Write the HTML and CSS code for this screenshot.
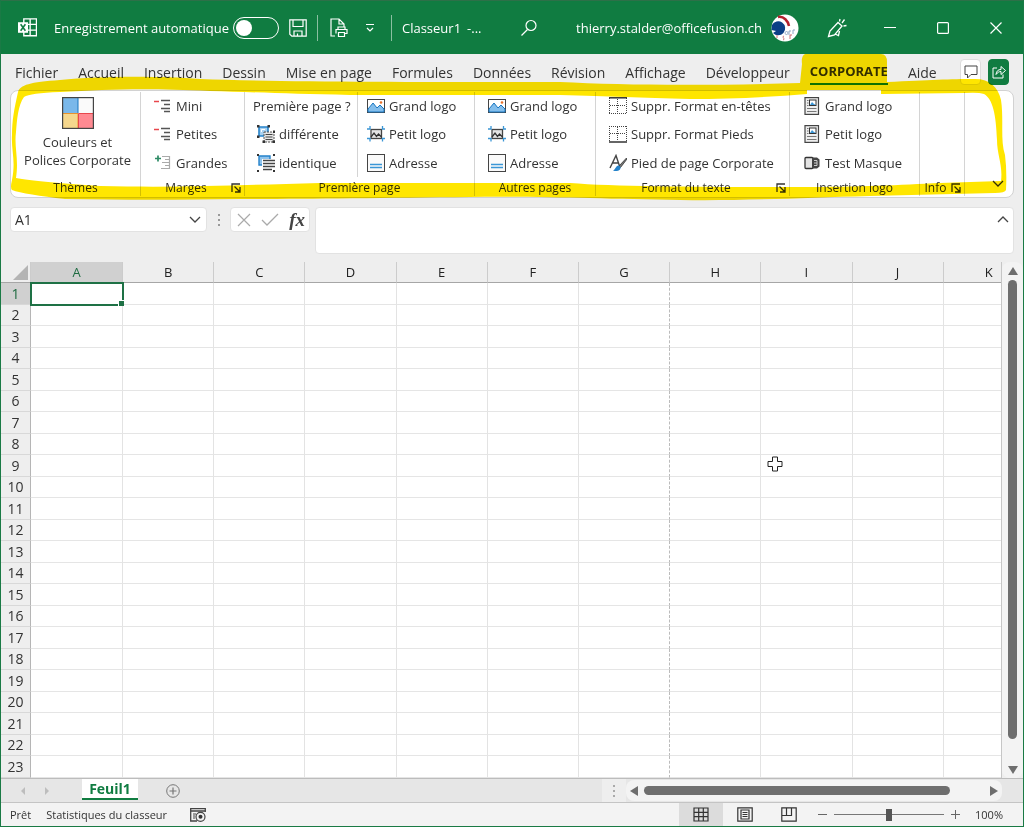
FILE: index.html
```html
<!DOCTYPE html>
<html lang="fr">
<head>
<meta charset="utf-8">
<title>Classeur1</title>
<link rel="stylesheet" href="styles.css">
</head>
<body>
<svg class="defs" aria-hidden="true">
  <symbol id="i-minus" viewBox="0 0 18 18"><path d="M0 4.500h5" stroke="#e8474c" stroke-width="1.500"/><path d="M7 3.500h9M10 7.500h6M7 11.500h9M10 14.500h6" stroke="#555" stroke-width="1.300"/></symbol>
  <symbol id="i-plus" viewBox="0 0 18 18"><path d="M1 4.500h6M4 1.500v6" stroke="#2e8b66" stroke-width="1.700"/><path d="M8 2.500h7M11 5.500h4M8 8.500h7M11 11.500h4M7 14.500h8M15.500 2v13" stroke="#aaa" stroke-width="1.200"/></symbol>
  <symbol id="i-picture" viewBox="0 0 18 18"><rect x=".5" y="2.500" width="17" height="13" fill="#fff" stroke="#444"/><path d="M1 12l5-6 4 5 3-3 4 4v3H1z" fill="#83beec" stroke="#1976c0"/><circle cx="14" cy="5.500" r="1.300" fill="#e8702a"/></symbol>
  <symbol id="i-small" viewBox="0 0 18 18"><rect x="4" y="4.500" width="10.500" height="9" fill="#e4e4e4" stroke="#444" stroke-width="1.300"/><path d="M4 12l3-4 2.500 3.500 2-2.500 3 3" fill="none" stroke="#333" stroke-width="1.300"/><path d="M0 4h3V1M15.500 1v3H18M0 13.500h3v3M15.500 16.500v-3H18" fill="none" stroke="#3a96d6" stroke-width="1.300"/></symbol>
  <symbol id="i-address" viewBox="0 0 18 18"><rect x=".5" y=".5" width="17" height="17" fill="#fafafa" stroke="#444"/><path d="M3 10.500h12M3 13.500h12" stroke="#3a96d6" stroke-width="1.300"/></symbol>
  <symbol id="i-group" viewBox="0 0 18 18"><path d="M2 2h9v9H2z" fill="#a9d1f0" stroke="#2482ca" stroke-width="1.600"/><path d="M4.500 7V4.500H8" fill="none" stroke="#fff"/><path d="M7 7h10v10H7z" fill="#e6e6e6" stroke="#555" stroke-dasharray="2 1"/><path d="M8.500 9.500h7M8.500 12h7M8.500 14.500h7" stroke="#444"/><path d="M0 0h2.500v2.500H0zM10.500 0H13v2.500h-2.500zM0 10.500h2.500V13H0zM16 5.500h2V8h-2zM5.500 15.500H8V18H5.500zM15.500 15.500H18V18h-2.500z" fill="#333"/></symbol>
  <symbol id="i-same" viewBox="0 0 18 18"><path d="M2 2h11v9H2z" fill="#8fc3ec" stroke="#2482ca" stroke-width="1.400"/><path d="M5 5h13v12H5z" fill="#fff"/><path d="M6 6.500h12M6 9.500h12M6 12.500h12M6 15.500h9" stroke="#444" stroke-width="1.300"/><path d="M0 0h2v2H0zM16 0h2v2h-2zM0 16h2v2H0zM16 16h2v2h-2z" fill="#333"/></symbol>
  <symbol id="i-border-top" viewBox="0 0 18 18"><path d="M.5 1v16M17.500 1v16M0 16.500h18M8.500 2v14M1 8.500h16" fill="none" stroke="#444" stroke-dasharray="1 1"/><path d="M0 .8h18" stroke="#333" stroke-width="1.500"/></symbol>
  <symbol id="i-border-bottom" viewBox="0 0 18 18"><path d="M.5 1v16M17.500 1v16M0 1.500h18M8.500 2v14M1 8.500h16" fill="none" stroke="#444" stroke-dasharray="1 1"/><path d="M0 17h18" stroke="#333" stroke-width="1.500"/></symbol>
  <symbol id="i-style" viewBox="0 0 18 18"><path d="M1 14L7 1.500 10.500 12M3.500 9h6" fill="none" stroke="#444" stroke-width="1.400"/><path d="M17.500 4L10 12l1.500 1.500L18 5z" fill="#777" stroke="#333" stroke-width=".8"/><path d="M10 11.500c-3-.5-3 3.500-6 5 4 1.500 8 0 7.500-3.500z" fill="#2482ca"/></symbol>
  <symbol id="i-page" viewBox="0 0 18 18"><rect x="2" y=".6" width="13.500" height="16.800" fill="#eee" stroke="#444" stroke-width="1.200"/><rect x="6.500" y="3" width="6.500" height="5.500" fill="#fff" stroke="#333"/><path d="M7 8l2-3 2 2 2 1z" fill="#3a96d6"/><path d="M4 3.500h1.500M4 6h1.500M4 8.500h1.500M4 11.500h9.500M4 14.500h9.500" stroke="#777"/></symbol>
  <symbol id="i-mask" viewBox="0 0 18 18"><rect x="2" y="3.500" width="8" height="11" rx="1" fill="#e4e4e4" stroke="#333" stroke-width="1.300"/><path d="M9 3.500h5l2.500 2v7l-2.500 2H9z" fill="#444"/><path d="M11 6.500h3v5h-3M11 9h3" fill="none" stroke="#ccc"/></symbol>
  <symbol id="i-launch" viewBox="0 0 10 10"><path d="M1 9V1h8M3.500 3.500l5 5M9 4v5H4" fill="none" stroke="#333" stroke-width="1.300"/></symbol>
</svg>

<div class="window">
  <header class="titlebar">
    <svg class="app-logo" viewBox="0 0 18 18"><path d="M5.500.8h12v16h-12zM5.500 6h12M5.500 11.500h12M11.500 1v16" fill="none" stroke="#fff" stroke-width="1.300"/><path d="M0 4h9.500v10H0z" fill="#fff"/><path d="M2.500 6l4.500 6M7 6l-4.500 6" stroke="#107c41" stroke-width="1.500"/></svg>
    <label class="autosave"><span>Enregistrement automatique</span><input type="checkbox" class="switch"></label>
    <button class="tb save" aria-label="Enregistrer"><svg viewBox="0 0 18 18" width="18" height="18"><path d="M.8.8h16.400v16.400H2.800l-2-2zM4 1v6.500h10V1M5 17v-5h8v5M8.500 17v-2.500" fill="none" stroke="#fff" stroke-width="1.200"/></svg></button>
    <i class="tb-sep"></i>
    <button class="tb print" aria-label="Imprimer"><svg viewBox="0 0 18 20" width="18" height="20"><path d="M5 18H1V1h8l5 5v3M9 1v5h5M6 15.500v-4h11v4h-2M8 11V9h7v2M8.500 14.500h6v4h-6z" fill="none" stroke="#fff" stroke-width="1.200"/></svg></button>
    <button class="tb custom" aria-label="Personnaliser"><svg viewBox="0 0 10 10" width="10" height="10"><path d="M1 1.500h8M2 5l3 3 3-3" fill="none" stroke="#fff" stroke-width="1.200"/></svg></button>
    <i class="tb-sep"></i>
    <span class="doc-name">Classeur1</span><span class="doc-more">-...</span>
    <button class="tb search" aria-label="Rechercher"><svg viewBox="0 0 18 18" width="18" height="18"><circle cx="11" cy="6.500" r="5" fill="none" stroke="#fff" stroke-width="1.200"/><path d="M7.500 10.500L1.500 16.500" stroke="#fff" stroke-width="1.300"/></svg></button>
    <button class="account"><span>thierry.stalder@officefusion.ch</span>
      <svg viewBox="0 0 28 28" width="28" height="28"><circle cx="14" cy="14" r="13.500" fill="#fff"/><path d="M1 11a7 7 0 1 1 1 8l3-2-4.500-1z" fill="#0b3f86"/><path d="M7 3c6-1 10 4 11 9" fill="none" stroke="#b3202c" stroke-width="2.500"/><path d="M14 19a1.500 1.500 0 1 1 0 .1M18 21v-4h2M22 20v-4h2" fill="none" stroke="#8fa7c4"/><path d="M6 24v-3M12 26c3-1-2-3 1-4M19 25v-4h2" fill="none" stroke="#cc6d73"/></svg></button>
    <button class="tb wide" aria-label="Nouveautés"><svg viewBox="0 0 20 20" width="20" height="20"><path d="M1.500 18.500L3 13 11 4.500l4 3.500-7.500 9zM8 16l3.500 1.500 1-4.500M12.500 3.500l.5-2.500M15 5l2.500-3.500M16.500 8l3-.5" fill="none" stroke="#fff" stroke-width="1.300"/></svg></button>
    <button class="tb wide" aria-label="Réduire"><svg viewBox="0 0 12 12" width="12" height="12"><path d="M0 5.500h12" stroke="#fff"/></svg></button>
    <button class="tb wide" aria-label="Agrandir"><svg viewBox="0 0 12 12" width="12" height="12"><rect x=".6" y=".6" width="10.800" height="10.800" rx="1" fill="none" stroke="#fff" stroke-width="1.200"/></svg></button>
    <button class="tb wide" aria-label="Fermer"><svg viewBox="0 0 12 12" width="12" height="12"><path d="M.5.5l11 11M11.500.5l-11 11" stroke="#fff" stroke-width="1.200"/></svg></button>
  </header>

  <div class="ribbon-area">
    <nav class="tabs">
      <button>Fichier</button><button>Accueil</button><button>Insertion</button><button>Dessin</button><button>Mise en page</button><button>Formules</button><button>Données</button><button>Révision</button><button>Affichage</button><button>Développeur</button><button class="active">CORPORATE</button><button>Aide</button>
      <span class="tab-tools">
        <button class="comment" aria-label="Commentaires"><svg viewBox="0 0 14 14" width="14" height="14"><path d="M1 1h12v8.500H7L3.500 13V9.500H1z" fill="none" stroke="#444"/></svg></button>
        <button class="share" aria-label="Partager"><svg viewBox="0 0 14 14" width="14" height="14"><path d="M5 3H1v10h10V9.500M4 9.500C4.500 6 6 4.500 9 4.500V1.500l4.500 4-4.500 4v-3C7 6.500 5.500 7.500 4 9.500z" fill="none" stroke="#fff"/></svg></button>
      </span>
    </nav>

    <section class="ribbon">
      <div class="group g-themes">
        <button class="big"><svg viewBox="0 0 32 32" width="32" height="32"><path d="M1 1h15v16H1z" fill="#7ab8ea"/><path d="M16 1h15v16H16z" fill="#fafafa"/><path d="M1 17h15v14H1z" fill="#f5d78d"/><path d="M16 17h15v14H16z" fill="#ff8a92"/><path d="M1 16.500h15v14.500" stroke="#e8912d" fill="none"/><path d="M16.500 31V16.500H31" stroke="#e8474c" fill="none"/><path d="M16 1v15" stroke="#1976c0"/><rect x=".6" y=".6" width="30.800" height="30.800" fill="none" stroke="#444" stroke-width="1.200"/></svg><span>Couleurs et<br>Polices Corporate</span></button>
        <div class="caption"><span>Thèmes</span></div>
      </div>
      <div class="group g-margins">
        <div class="items">
          <button><svg class="ic"><use href="#i-minus"/></svg>Mini</button>
          <button><svg class="ic"><use href="#i-minus"/></svg>Petites</button>
          <button><svg class="ic"><use href="#i-plus"/></svg>Grandes</button>
        </div>
        <div class="caption"><span>Marges</span><button class="launch" aria-label="Options de marges"><svg><use href="#i-launch"/></svg></button></div>
      </div>
      <div class="group g-first">
        <div class="split">
          <div class="items left">
            <span class="question">Première page ?</span>
            <button><svg class="ic"><use href="#i-group"/></svg>différente</button>
            <button><svg class="ic"><use href="#i-same"/></svg>identique</button>
          </div>
          <div class="items right">
            <button><svg class="ic"><use href="#i-picture"/></svg>Grand logo</button>
            <button><svg class="ic"><use href="#i-small"/></svg>Petit logo</button>
            <button><svg class="ic"><use href="#i-address"/></svg>Adresse</button>
          </div>
        </div>
        <div class="caption"><span>Première page</span></div>
      </div>
      <div class="group g-other">
        <div class="items">
          <button><svg class="ic"><use href="#i-picture"/></svg>Grand logo</button>
          <button><svg class="ic"><use href="#i-small"/></svg>Petit logo</button>
          <button><svg class="ic"><use href="#i-address"/></svg>Adresse</button>
        </div>
        <div class="caption"><span>Autres pages</span></div>
      </div>
      <div class="group g-format">
        <div class="items">
          <button><svg class="ic"><use href="#i-border-top"/></svg>Suppr. Format en-têtes</button>
          <button><svg class="ic"><use href="#i-border-bottom"/></svg>Suppr. Format Pieds</button>
          <button><svg class="ic"><use href="#i-style"/></svg>Pied de page Corporate</button>
        </div>
        <div class="caption"><span>Format du texte</span><button class="launch" aria-label="Options de format"><svg><use href="#i-launch"/></svg></button></div>
      </div>
      <div class="group g-insert">
        <div class="items">
          <button><svg class="ic"><use href="#i-page"/></svg>Grand logo</button>
          <button><svg class="ic"><use href="#i-page"/></svg>Petit logo</button>
          <button><svg class="ic"><use href="#i-mask"/></svg>Test Masque</button>
        </div>
        <div class="caption"><span>Insertion logo</span></div>
      </div>
      <div class="group g-info">
        <div class="items"></div>
        <div class="caption"><span>Info</span><button class="launch" aria-label="Informations"><svg><use href="#i-launch"/></svg></button></div>
      </div>
      <div class="ribbon-end"><button aria-label="Réduire le ruban"><svg viewBox="0 0 12 8" width="12" height="8"><path d="M1 1l5 5 5-5" fill="none" stroke="#333" stroke-width="1.300"/></svg></button></div>
    </section>

    <svg class="marker" viewBox="0 54 1024 150" preserveAspectRatio="none" aria-hidden="true">
      <path fill="#ffe600" fill-rule="evenodd" d="M18 92C20 85 30 82 60 80C100 76 160 76 200 79C280 82 420 82 560 82C620 85 700 86 800 83L802 64Q801 56 805 54H881Q887 54 887 62V82C930 80 950 79 975 79C990 79 998 87 1001 100C1004 120 1000 140 1005 155Q1007 170 1006 190Q1005 193 995 193L870 196C800 198 740 201 680 200C600 199 540 196 470 197C380 198 300 199 240 199C180 200 120 200 65 199C40 196 20 193 12 190Q10 188 12 180C16 160 11 150 12 135C12 120 14 110 18 92ZM24 97C18 105 17 120 16 132C14 148 19 158 16 178C30 181 60 183 100 186C180 188 240 185 320 183H570C620 187 720 187 800 187C860 187 900 185 940 183L1001 181C1003 165 997 155 997 140C996 115 993 99 984 94Q978 92 965 93L881 94V90H807V94C770 97 730 99 690 99C640 98 610 96 560 95H350C290 94 250 92 210 91C150 88 110 89 60 92Q30 93 24 97Z"/>
    </svg>
  </div>

  <div class="formula-row">
    <div class="namebox"><input type="text" value="A1" aria-label="Zone Nom"><button aria-label="Ouvrir la liste"><svg viewBox="0 0 12 8" width="12" height="8"><path d="M1 1l5 5 5-5" fill="none" stroke="#444" stroke-width="1.300"/></svg></button></div>
    <svg class="dots" viewBox="0 0 4 14"><path d="M1 1h2v2H1zM1 6h2v2H1zM1 11h2v2H1z" fill="#999"/></svg>
    <div class="fx-tools">
      <button aria-label="Annuler"><svg viewBox="0 0 14 14" width="14" height="14"><path d="M1 1l12 12M13 1L1 13" stroke="#aaa" stroke-width="1.200"/></svg></button>
      <button aria-label="Entrer"><svg viewBox="0 0 18 14" width="18" height="14"><path d="M1 7l5 5L17 1" fill="none" stroke="#aaa" stroke-width="1.300"/></svg></button>
      <button class="fx">fx</button>
    </div>
    <div class="formula"><textarea aria-label="Barre de formule"></textarea><button aria-label="Réduire la barre"><svg viewBox="0 0 12 8" width="12" height="8"><path d="M1 7l5-5 5 5" fill="none" stroke="#444" stroke-width="1.300"/></svg></button></div>
  </div>

  <main class="sheet">
    <div class="grid-view">
      <table class="cells" id="cells"></table>
      <svg class="cursor" viewBox="0 0 16 16"><path d="M5.500 1h5v4.500H15v5h-4.500V15h-5v-4.500H1v-5h4.500z" fill="#fff" stroke="#222"/></svg>
    </div>
    <div class="vscroll">
      <svg viewBox="0 0 10 8" width="10" height="8"><path d="M5 0l5 8H0z" fill="#6e6e6e"/></svg>
      <div class="thumb"></div>
      <svg viewBox="0 0 10 8" width="10" height="8"><path d="M5 8L0 0h10z" fill="#6e6e6e"/></svg>
    </div>
  </main>

  <div class="sheetbar">
    <button class="nav" aria-label="Feuille précédente"><svg viewBox="0 0 4 8" width="4" height="8"><path d="M4 0v8L0 4z" fill="#bdbdbd"/></svg></button>
    <button class="nav" aria-label="Feuille suivante"><svg viewBox="0 0 4 8" width="4" height="8"><path d="M0 0v8l4-4z" fill="#bdbdbd"/></svg></button>
    <button class="sheet-tab">Feuil1</button>
    <button class="add" aria-label="Nouvelle feuille"><svg viewBox="0 0 14 14" width="14" height="14"><circle cx="7" cy="7" r="6.300" fill="none" stroke="#777"/><path d="M3.500 7h7M7 3.500v7" stroke="#777" stroke-width="1.200"/></svg></button>
    <div class="splitter"><svg viewBox="0 0 2 12" width="2" height="12"><path d="M0 0h2v2H0zM0 5h2v2H0zM0 10h2v2H0z" fill="#aaa"/></svg></div>
    <div class="hscroll">
      <svg viewBox="0 0 8 10" width="8" height="10"><path d="M8 0v10L0 5z" fill="#6e6e6e"/></svg>
      <div class="track"><div class="thumb"></div></div>
      <svg viewBox="0 0 8 10" width="8" height="10"><path d="M0 0v10l8-5z" fill="#6e6e6e"/></svg>
    </div>
  </div>

  <footer class="status">
    <span class="ready">Prêt</span>
    <button class="stats">Statistiques du classeur</button>
    <button class="macro" aria-label="Enregistrer une macro"><svg viewBox="0 0 16 14" width="16" height="14"><path d="M7 13H.7V.7h14.600V4M1 3h14" fill="none" stroke="#444" stroke-width="1.300"/><path d="M3 6h3M3 8h2M3 10h2" stroke="#444"/><circle cx="10.500" cy="8.800" r="4.500" fill="#f3f3f3" stroke="#444" stroke-width="1.200"/><circle cx="10.500" cy="8.800" r="2" fill="#333"/></svg></button>
    <button class="view on" aria-label="Normal"><svg viewBox="0 0 16 15" width="16" height="15"><path d="M1 1h14v13H1zM1 5.300h14M1 9.700h14M5.700 1v13M10.300 1v13" fill="none" stroke="#333" stroke-width="1.200"/></svg></button>
    <button class="view" aria-label="Mise en page"><svg viewBox="0 0 16 15" width="16" height="15"><path d="M.8.8h14.400v13.400H.8zM4 3h8v9H4z" fill="none" stroke="#333" stroke-width="1.200"/><path d="M5.500 5.500h5M5.500 7.500h5M5.500 9.500h5" stroke="#333"/></svg></button>
    <button class="view" aria-label="Sauts de page"><svg viewBox="0 0 16 15" width="16" height="15"><path d="M.8.8h14.400v13.400H.8zM1 8.500h9.500V1M5.500 1v7.500" fill="none" stroke="#333" stroke-width="1.200"/></svg></button>
    <button class="zoom-btn" aria-label="Zoom arrière"><svg viewBox="0 0 9 9" width="9" height="9"><path d="M0 4.500h9" stroke="#666"/></svg></button>
    <input class="zoom" type="range" min="0" max="100" value="50" aria-label="Zoom">
    <button class="zoom-btn" aria-label="Zoom avant"><svg viewBox="0 0 9 9" width="9" height="9"><path d="M0 4.500h9M4.500 0v9" stroke="#666"/></svg></button>
    <button class="percent">100%</button>
  </footer>
</div>
<script src="grid.js"></script>
</body>
</html>
```
FILE: styles.css
```css
* { box-sizing: border-box; }
body { margin: 0; font-family: "Open Sans", "Noto Sans", sans-serif; font-size: 13px; color: #333; }
button, input, textarea { font: inherit; color: inherit; border: 0; padding: 0; margin: 0; background: none; }
button { white-space: nowrap; }
svg { display: block; flex: none; }
.defs { position: absolute; width: 0; height: 0; }
.window { display: flex; flex-direction: column; min-height: 100vh; background: #eee; border: solid #1a7a45; border-width: 0 1px 1px 1px; }

.titlebar { display: flex; align-items: center; height: 54px; padding-left: 17px; background: #107c41; color: #fff; border-top: 1px solid #2d7048; }
.app-logo { width: 19px; height: 19px; margin-right: 17px; }
.autosave { display: flex; align-items: center; gap: 4px; white-space: nowrap; }
.switch { appearance: none; width: 46px; height: 22px; border: 1px solid #fff; border-radius: 11px; padding: 2px; }
.switch::before { content: ""; display: block; width: 16px; height: 16px; border-radius: 50%; background: #fff; }
.tb { display: flex; justify-content: center; align-items: center; }
.save { width: 38px; }
.tb-sep { width: 1px; height: 26px; background: #8bbfa1; }
.print { width: 42px; }
.custom { width: 20px; margin-right: 11px; }
.doc-name { margin-left: 10px; }
.doc-more { margin-left: 6px; }
.search { width: 32px; margin: 0 auto; }
.account { display: flex; align-items: center; gap: 9px; margin-right: 12px; }
.wide { width: 53px; height: 40px; }

.ribbon-area { position: relative; padding: 0 9px; }
.tabs { display: flex; align-items: center; gap: 20px; height: 36px; padding-left: 5px; font-size: 14px; }
.tabs .active { font-weight: 700; font-size: 13px; height: 26px; border-bottom: 2px solid #107c41; color: #333; }
.tab-tools { display: flex; gap: 7px; margin-left: auto; padding-right: 5px; }
.comment, .share { display: grid; place-items: center; width: 21px; height: 26px; border-radius: 4px; background: #fff; border: 1px solid #ddd; }
.share { background: #107c41; border-color: #107c41; }
.ribbon { display: flex; height: 108px; background: #fff; border: 1px solid #d2d2d2; border-radius: 8px; }
.group { display: flex; flex-direction: column; position: relative; border-right: 1px solid #d4d4d4; margin: 1px 0; }
.g-themes { width: 130px; }
.g-margins { width: 104px; }
.g-first { width: 230px; }
.g-other { width: 121px; }
.g-format { width: 194px; }
.g-insert { width: 130px; }
.g-info { width: 45px; }
.items { display: grid; grid-template-rows: repeat(3, 1fr); height: 85px; padding-left: 13px; align-items: center; justify-items: start; }
.items button { display: flex; align-items: center; gap: 4px; }
.ic { width: 18px; height: 18px; }
.split { display: flex; }
.left { width: 112px; padding-left: 12px; }
.question { margin-left: -4px; white-space: nowrap; }
.right { border-left: 1px solid #d4d4d4; padding-left: 9px; }
.big { display: flex; flex-direction: column; align-items: center; height: 85px; padding: 5px 0 0 4px; gap: 4px; line-height: 18px; }
.caption { display: flex; align-items: center; height: 16px; margin-top: auto; font-size: 12px; line-height: 16px; }
.caption span { flex: 1; text-align: center; white-space: nowrap; }
.launch { margin-right: 3px; }
.launch svg { width: 10px; height: 10px; }
.ribbon-end { flex: 1; display: flex; justify-content: flex-end; align-items: flex-end; padding: 0 9px 9px; }
.marker { position: absolute; inset: 0 -1px auto -1px; width: calc(100% + 2px); height: 150px; mix-blend-mode: multiply; pointer-events: none; }

.formula-row { display: flex; align-items: flex-start; padding: 9px 9px 8px; }
.namebox, .fx-tools, .formula { display: flex; background: #fff; border: 1px solid #e2e2e2; border-radius: 4px; height: 25px; }
.namebox { width: 197px; align-items: center; padding: 0 5px 0 4px; }
.namebox input { flex: 1; min-width: 0; font-size: 14px; }
.dots { width: 4px; height: 14px; margin: 6px 9px 0 10px; }
.fx-tools { width: 80px; align-items: center; justify-content: space-between; padding: 0 4px 0 6px; }
.fx { font: italic 700 19px/20px "Liberation Serif", serif; color: #444; }
.formula { flex: 1; height: 47px; margin-left: 5px; padding: 0 4px 0 6px; }
.formula textarea { flex: 1; resize: none; height: 100%; }
.formula button { height: 22px; }

.sheet { flex: 1; display: flex; min-height: 0; }
.grid-view { flex: 1; min-width: 0; position: relative; overflow: hidden; border-right: 1px solid #c6c6c6; }
.cells { table-layout: fixed; border-collapse: separate; border-spacing: 0; width: 1034px; background: #fff; }
.cells .rowhead { width: 30px; }
.cells .first { width: 92px; }
.cells th { font-weight: 400; padding: 0; background: #eee; font-size: 14px; }
.cells thead th { height: 21px; line-height: 20px; border-right: 1px solid #ccc; border-bottom: 1px solid #a6a6a6; color: #222; }
.cells thead th:not(.rowhead) { font-size: 13px; }
.cells thead th.sel { background: #d0d0d0; color: #1e6b41; }
.cells thead .corner { padding: 3px 2px 2px 12px; }
.corner svg { width: 15px; height: 15px; }
.cells tbody tr { height: 22px; line-height: 20px; }
.cells tbody tr:nth-child(even) { height: 21px; }
.cells tbody th { border-right: 1px solid #b5b5b5; border-bottom: 1px solid #d8d8d8; }
.cells tbody th.sel { background: #d0d0d0; color: #1e6b41; }
.cells td { padding: 0; border-right: 1px solid #e3e3e3; border-bottom: 1px solid #e5e5e5; }
.cells td.break { border-right: 1px dashed #bbb; }
.cells td.active { position: relative; outline: 2px solid #1e7145; outline-offset: -1px; }
.cells td.active::after { content: ""; position: absolute; right: -2px; bottom: -2px; width: 5px; height: 5px; background: #1e7145; border: solid #fff; border-width: 1px 0 0 1px; }
.cursor { position: absolute; left: 766px; top: 194px; width: 16px; height: 16px; }
.vscroll { width: 21px; display: flex; flex-direction: column; align-items: center; gap: 5px; padding: 5px 0 4px; background: #f3f3f3; border-radius: 8px; }
.vscroll .thumb { flex: 1; width: 9px; border-radius: 5px; background: #6e6e6e; margin-bottom: 22px; }

.sheetbar { display: flex; align-items: center; height: 25px; background: #e6e6e6; border-top: 1px solid #bcbcbc; border-bottom: 1px solid #c4c4c4; padding-right: 21px; }
.nav { width: 24px; display: flex; justify-content: center; }
.nav:first-child { margin-left: 10px; }
.sheet-tab { align-self: flex-start; margin-left: 23px; width: 56px; height: 21px; background: #fff; border-bottom: 2px solid #107c41; color: #107c41; font-weight: 700; font-size: 14px; line-height: 18px; }
.add { margin-left: 28px; }
.splitter { display: grid; place-items: center; width: 24px; height: 23px; margin-left: auto; background: #eee; }
.hscroll { display: flex; align-items: center; gap: 6px; width: 376px; height: 21px; padding: 0 4px; background: #f3f3f3; border-radius: 8px; }
.hscroll .track { flex: 1; }
.hscroll .thumb { width: 90%; height: 9px; border-radius: 5px; background: #6e6e6e; }

.status { display: flex; align-items: center; height: 23px; background: #f3f3f3; font-size: 11px; padding: 0 20px 0 9px; }
.stats { margin-left: 15px; }
.macro { margin: 0 auto 0 23px; }
.view { display: grid; place-items: center; width: 44px; height: 23px; }
.view.on { background: #dcdcdc; }
.zoom-btn { margin-left: 7px; }
.zoom { appearance: none; width: 110px; height: 14px; margin-left: 7px; background: linear-gradient(#777, #777) center / 100% 1px no-repeat; }
.zoom::-webkit-slider-thumb { appearance: none; width: 6px; height: 12px; background: #555; }
.percent { width: 28px; margin-left: 15px; font-size: 11px; }
```
FILE: grid.js
```js
const columns = "ABCDEFGHIJK".split("");
const rowCount = 23;
const corner = '<svg viewBox="0 0 15 15"><path d="M15 0v15H0z" fill="#b4b4b4"/></svg>';

const head = columns.map((c, i) =>
  `<th scope="col" class="${i === 0 ? "first sel" : ""}">${c}</th>`).join("");

let rows = "";
for (let r = 1; r <= rowCount; r++) {
  const cells = columns.map((c) => {
    const active = c === "A" && r === 1 ? "active" : "";
    const pageBreak = c === "G" ? "break" : "";
    return `<td class="${active}${pageBreak}"></td>`;
  }).join("");
  rows += `<tr><th scope="row" class="${r === 1 ? "sel" : ""}">${r}</th>${cells}</tr>`;
}

document.getElementById("cells").innerHTML =
  `<thead><tr><th class="corner rowhead">${corner}</th>${head}</tr></thead><tbody>${rows}</tbody>`;
```
